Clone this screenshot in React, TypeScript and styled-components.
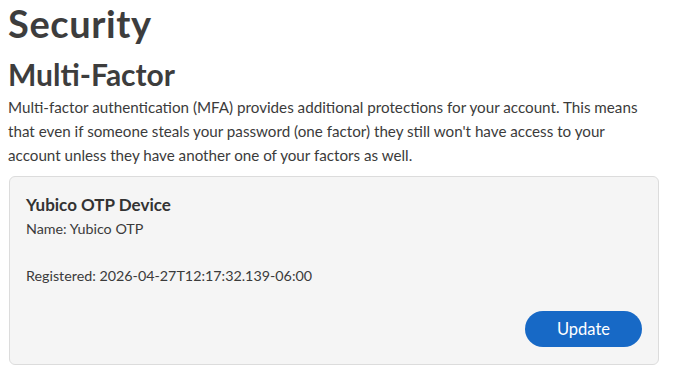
import styled, { createGlobalStyle } from 'styled-components';

const Global = createGlobalStyle`
  body {
    margin: 0;
    background: #fff;
    font-family: Lato, "Noto Sans", sans-serif;
    color: #3b3b3b;
  }
`;

const Page = styled.main`
  width: 651px;
  padding: 1px 8px 0;
`;

const Title = styled.h1`
  margin: 0;
  font-size: 38px;
  line-height: 1.2;
  font-weight: 700;
  letter-spacing: 0.6px;
  color: #3d3d3d;
`;

const SectionTitle = styled.h2`
  margin: 9px 0 0;
  font-size: 30px;
  line-height: 1.2;
  font-weight: 700;
  color: #3d3d3d;
`;

const Intro = styled.p`
  margin: 3px 0 0;
  font-size: 15.2px;
  line-height: 24px;
`;

const Card = styled.section`
  margin: 9px 0 0 1px;
  background: #f5f5f5;
  border: 1px solid #dcdcdc;
  border-radius: 6px;
  padding: 16px 16px 17px;
  display: flex;
  flex-direction: column;
`;

const DeviceName = styled.h3`
  margin: 0;
  font-size: 17px;
  line-height: 23px;
  font-weight: 700;
  color: #333;
`;

const Detail = styled.div<{ $gap?: number }>`
  margin-top: ${(p) => p.$gap ?? 0}px;
  font-size: 14.3px;
  line-height: 23px;
  color: #3b3b3b;
`;

const Actions = styled.div`
  display: flex;
  justify-content: flex-end;
  margin-top: 24px;
`;

const Button = styled.button`
  width: 117px;
  height: 36px;
  border: none;
  border-radius: 18px;
  background: #1769c6;
  color: #fff;
  font-family: Lato, "Noto Sans", sans-serif;
  font-size: 16.5px;
  cursor: pointer;
`;

export default function App() {
  return (
    <Page>
      <Global />
      <Title>Security</Title>
      <SectionTitle>Multi-Factor</SectionTitle>
      <Intro>
        Multi-factor authentication (MFA) provides additional protections for
        your account. This means that even if someone steals your password (one
        factor) they still won't have access to your account unless they have
        another one of your factors as well.
      </Intro>
      <Card>
        <DeviceName>Yubico OTP Device</DeviceName>
        <Detail $gap={1}>Name: Yubico OTP</Detail>
        <Detail $gap={24}>Registered: 2026-04-27T12:17:32.139-06:00</Detail>
        <Actions>
          <Button>Update</Button>
        </Actions>
      </Card>
    </Page>
  );
}
